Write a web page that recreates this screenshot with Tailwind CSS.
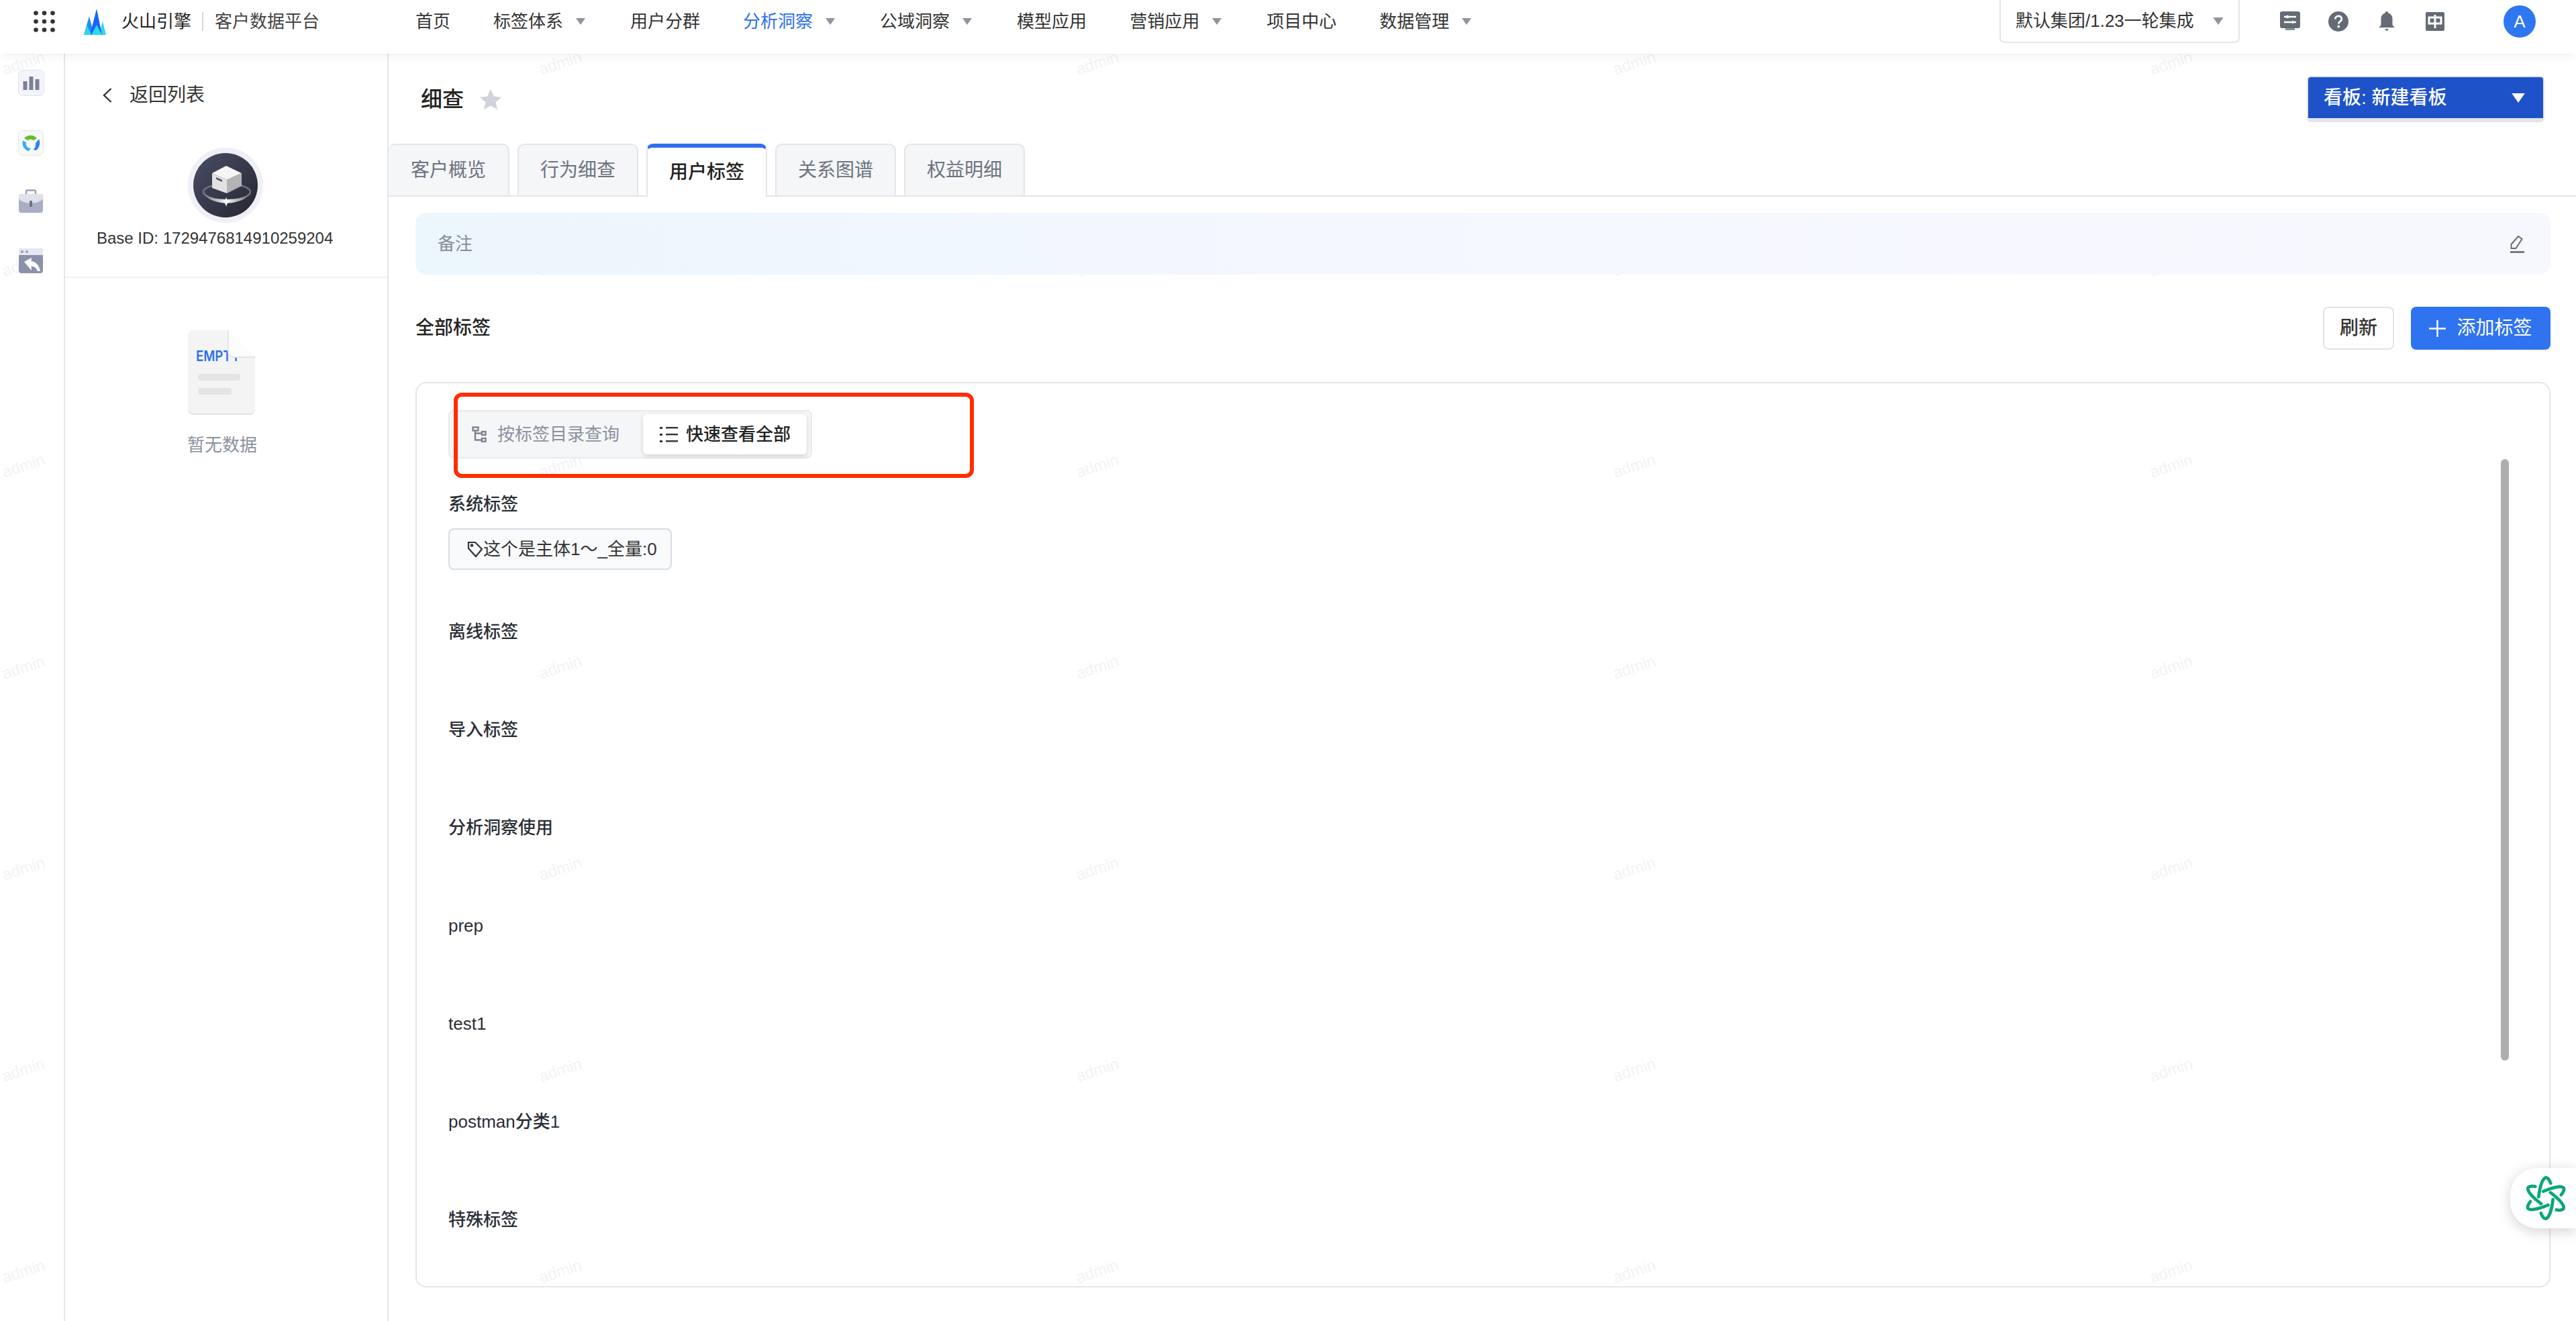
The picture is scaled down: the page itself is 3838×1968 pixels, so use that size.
<!DOCTYPE html>
<html lang="zh">
<head>
    <meta charset="UTF-8">
    <title>细查 | 客户数据平台</title>
    <script src="https://cdn.jsdelivr.net/npm/@tailwindcss/browser@4"></script>
</head>
<body class="bg-white">
<div class="relative w-[3838px] h-[1968px] overflow-hidden bg-white text-[#333] font-['Liberation_Sans','Noto_Sans_CJK_SC',sans-serif]">

    <!-- watermark -->
    <div class="absolute left-0 top-[78px] grid grid-cols-[repeat(5,800px)] auto-rows-[300px] items-start pointer-events-none text-[#f3f3f5] text-[24px] leading-[32px]">
        <span class="w-[70px] h-[32px] text-center -rotate-[18deg]">admin</span><span class="w-[70px] h-[32px] text-center -rotate-[18deg]">admin</span><span class="w-[70px] h-[32px] text-center -rotate-[18deg]">admin</span><span class="w-[70px] h-[32px] text-center -rotate-[18deg]">admin</span><span class="w-[70px] h-[32px] text-center -rotate-[18deg]">admin</span>
        <span class="w-[70px] h-[32px] text-center -rotate-[18deg]">admin</span><span class="w-[70px] h-[32px] text-center -rotate-[18deg]">admin</span><span class="w-[70px] h-[32px] text-center -rotate-[18deg]">admin</span><span class="w-[70px] h-[32px] text-center -rotate-[18deg]">admin</span><span class="w-[70px] h-[32px] text-center -rotate-[18deg]">admin</span>
        <span class="w-[70px] h-[32px] text-center -rotate-[18deg]">admin</span><span class="w-[70px] h-[32px] text-center -rotate-[18deg]">admin</span><span class="w-[70px] h-[32px] text-center -rotate-[18deg]">admin</span><span class="w-[70px] h-[32px] text-center -rotate-[18deg]">admin</span><span class="w-[70px] h-[32px] text-center -rotate-[18deg]">admin</span>
        <span class="w-[70px] h-[32px] text-center -rotate-[18deg]">admin</span><span class="w-[70px] h-[32px] text-center -rotate-[18deg]">admin</span><span class="w-[70px] h-[32px] text-center -rotate-[18deg]">admin</span><span class="w-[70px] h-[32px] text-center -rotate-[18deg]">admin</span><span class="w-[70px] h-[32px] text-center -rotate-[18deg]">admin</span>
        <span class="w-[70px] h-[32px] text-center -rotate-[18deg]">admin</span><span class="w-[70px] h-[32px] text-center -rotate-[18deg]">admin</span><span class="w-[70px] h-[32px] text-center -rotate-[18deg]">admin</span><span class="w-[70px] h-[32px] text-center -rotate-[18deg]">admin</span><span class="w-[70px] h-[32px] text-center -rotate-[18deg]">admin</span>
        <span class="w-[70px] h-[32px] text-center -rotate-[18deg]">admin</span><span class="w-[70px] h-[32px] text-center -rotate-[18deg]">admin</span><span class="w-[70px] h-[32px] text-center -rotate-[18deg]">admin</span><span class="w-[70px] h-[32px] text-center -rotate-[18deg]">admin</span><span class="w-[70px] h-[32px] text-center -rotate-[18deg]">admin</span>
        <span class="w-[70px] h-[32px] text-center -rotate-[18deg]">admin</span><span class="w-[70px] h-[32px] text-center -rotate-[18deg]">admin</span><span class="w-[70px] h-[32px] text-center -rotate-[18deg]">admin</span><span class="w-[70px] h-[32px] text-center -rotate-[18deg]">admin</span><span class="w-[70px] h-[32px] text-center -rotate-[18deg]">admin</span>
    </div>

    <!-- top bar -->
    <header class="relative z-10 h-[80px] pb-[16px] flex items-center bg-white shadow-[0_2px_14px_rgba(0,0,0,0.07)]">
        <svg class="ml-[50px] w-[32px] h-[32px]" viewBox="0 0 32 32" fill="#333">
            <circle cx="3.500" cy="3.500" r="3.300"/><circle cx="16" cy="3.500" r="3.300"/><circle cx="28.500" cy="3.500" r="3.300"/>
            <circle cx="3.500" cy="16" r="3.300"/><circle cx="16" cy="16" r="3.300"/><circle cx="28.500" cy="16" r="3.300"/>
            <circle cx="3.500" cy="28.500" r="3.300"/><circle cx="16" cy="28.500" r="3.300"/><circle cx="28.500" cy="28.500" r="3.300"/>
        </svg>
        <svg class="ml-[43px] w-[34px] h-[40px]" viewBox="0 0 34 40">
            <path d="M0 40 8 12l7 28z" fill="#1f8cf5"/>
            <path d="M33 40 28 20l-6 20z" fill="#36d6e0"/>
            <path d="M9 40 19 1l8 39z" fill="#1664ff"/>
            <path d="M0 40 5 26l6 14z" fill="#2fd9e6"/>
            <path d="M11 40l8-15 8 15z" fill="#2fd9e6"/>
        </svg>
        <span class="ml-[22px] text-[26px] text-[#222] whitespace-nowrap">火山引擎</span>
        <span class="ml-[16px] w-[2px] h-[28px] bg-[#d5d8de]"></span>
        <span class="ml-[17px] text-[26px] text-[#444] whitespace-nowrap">客户数据平台</span>

        <nav class="ml-[143px] flex items-center gap-[64px] text-[26px] text-[#333] whitespace-nowrap">
            <a>首页</a>
            <a class="flex items-center gap-[19px] mr-[3px]">标签体系
                <svg class="w-[14px] h-[10px]" viewBox="0 0 14 10"><path d="M0 0h14L7 10z" fill="#8f959e"/></svg></a>
            <a>用户分群</a>
            <a class="flex items-center gap-[19px] mr-[3px] text-[#2f6fed]">分析洞察
                <svg class="w-[14px] h-[10px]" viewBox="0 0 14 10"><path d="M0 0h14L7 10z" fill="#8f959e"/></svg></a>
            <a class="flex items-center gap-[19px] mr-[3px]">公域洞察
                <svg class="w-[14px] h-[10px]" viewBox="0 0 14 10"><path d="M0 0h14L7 10z" fill="#8f959e"/></svg></a>
            <a>模型应用</a>
            <a class="flex items-center gap-[19px] mr-[3px]">营销应用
                <svg class="w-[14px] h-[10px]" viewBox="0 0 14 10"><path d="M0 0h14L7 10z" fill="#8f959e"/></svg></a>
            <a>项目中心</a>
            <a class="flex items-center gap-[19px]">数据管理
                <svg class="w-[14px] h-[10px]" viewBox="0 0 14 10"><path d="M0 0h14L7 10z" fill="#8f959e"/></svg></a>
        </nav>

        <div class="ml-auto self-start h-[64px] w-[358px] flex items-center justify-between pl-[22px] pr-[22px] bg-white border-2 border-t-0 border-[#e5e6eb] rounded-b-[8px] text-[26px] text-[#333] whitespace-nowrap">
            <span>默认集团/1.23一轮集成</span>
            <svg class="w-[16px] h-[11px]" viewBox="0 0 14 10"><path d="M0 0h14L7 10z" fill="#8f959e"/></svg>
        </div>

        <svg class="ml-[60px] w-[30px] h-[30px]" viewBox="0 0 30 30">
            <rect x="0" y="0" width="30" height="25" rx="3" fill="#646b75"/><rect x="8" y="25" width="14" height="3" fill="#8b919a"/>
            <path d="M6 8h18M6 16h18" stroke="#fff" stroke-width="2.400"/><circle cx="11" cy="8" r="2.200" fill="#fff"/><path d="M18 13.500 23 16l-5 2.500z" fill="#fff"/>
        </svg>
        <svg class="ml-[42px] w-[30px] h-[30px]" viewBox="0 0 30 30">
            <circle cx="15" cy="15" r="15" fill="#646b75"/>
            <path d="M10.300 11.500c0-6 9.600-6 9.600-.3 0 3.600-4.500 3.600-4.500 7.300" fill="none" stroke="#fff" stroke-width="2.800"/><circle cx="15.300" cy="22.500" r="1.900" fill="#fff"/>
        </svg>
        <svg class="ml-[45px] w-[24px] h-[30px]" viewBox="0 0 24 30">
            <path d="M12 0c1.500 0 2.200 1 2.300 2.400C18.500 3.600 20.500 7 20.500 11v8c0 2 1.500 3.500 3.500 5H0c2-1.500 3.500-3 3.500-5v-8c0-4 2-7.400 6.200-8.600C9.800 1 10.500 0 12 0z" fill="#646b75"/>
            <path d="M9 26h6l-3 3.500z" fill="#646b75"/>
        </svg>
        <svg class="ml-[46px] w-[28px] h-[28px]" viewBox="0 0 28 28">
            <rect width="28" height="28" rx="2" fill="#646b75"/>
            <path d="M14 4v20" stroke="#fff" stroke-width="3"/><rect x="5" y="8" width="18" height="9" fill="none" stroke="#fff" stroke-width="3"/>
        </svg>
        <span class="ml-[88px] mr-[60px] w-[48px] h-[48px] rounded-full bg-[#2f76f1] text-white text-[26px] flex items-center justify-center">A</span>
    </header>

    <div class="relative flex h-[1888px]">
        <!-- app rail -->
        <aside class="w-[97px] shrink-0 border-r-2 border-[#e3e6ee] flex flex-col pl-[27px] pt-[24px]">
            <svg class="w-[39px] h-[39px]" viewBox="0 0 39 39">
                <rect x="0.500" y="0.500" width="38" height="38" rx="7" fill="#f4f5fb" stroke="#dfe2ec"/>
                <rect x="7.500" y="17" width="6" height="13" fill="#7b8098"/><rect x="16.500" y="10" width="6" height="20" fill="#7b8098"/><rect x="25.500" y="14" width="6" height="16" fill="#7b8098"/>
            </svg>
            <svg class="mt-[51px] w-[38px] h-[38px]" viewBox="0 0 38 38">
                <rect x="0.500" y="0.500" width="37" height="37" rx="7" fill="#f8f8fa" stroke="#e3e4ea"/>
                <path d="M9 12a13 13 0 0 1 19 0l-5 3a8 8 0 0 0-9 0z" fill="#62c21d"/>
                <path d="M7 15.500c-2 7 2 14 9 15.500l3-4c-5-.5-8-3-7-9z" fill="#2fb0f7"/>
                <path d="M31 13c2.500 6 1 13-4 17l-4.500-1c3-2.500 4-5.500 3.500-9.500z" fill="#2b82f2"/>
            </svg>
            <svg class="mt-[50px] w-[38px] h-[36px]" viewBox="0 0 38 36">
                <path d="M12 9V3.500a2 2 0 0 1 2-2h10a2 2 0 0 1 2 2V9" fill="none" stroke="#9da2b8" stroke-width="2.500"/>
                <rect x="1" y="7" width="36" height="28" rx="4" fill="#a9aec6"/>
                <path d="M1 11a4 4 0 0 1 4-4h28a4 4 0 0 1 4 4v3c-4 5-11 6.500-18 6.500S5 19 1 14z" fill="#dfe1ec"/>
                <rect x="17" y="17" width="4" height="9" rx="1" fill="#6b7088"/>
            </svg>
            <svg class="mt-[52px] w-[38px] h-[38px]" viewBox="0 0 38 38">
                <rect x="1" y="0" width="36" height="37" rx="4" fill="#8b90ab"/>
                <path d="M1 10V4a4 4 0 0 1 4-4h28a4 4 0 0 1 4 4v6z" fill="#e6e8f1"/>
                <circle cx="6" cy="5" r="2" fill="#9a9eb8"/><circle cx="13" cy="5" r="2" fill="#9a9eb8"/>
                <path d="M9 20 20 14l-.500 5c7 1 12 6 13.500 15h-4c-2-5-5-7-9.500-7.500L20 33z" fill="#fff"/>
            </svg>
        </aside>

        <!-- entity panel -->
        <aside class="w-[482px] shrink-0 border-r-2 border-[#e3e6ee] flex flex-col">
            <div class="mt-[40px] h-[44px] flex items-center pl-[56px] text-[28px] text-[#333]">
                <svg class="w-[14px] h-[24px]" viewBox="0 0 14 24" fill="none"><path d="M12.500 2 2 12l10.500 10" stroke="#333" stroke-width="2.400"/></svg>
                <span class="ml-[26px]">返回列表</span>
            </div>
            <svg class="mt-[56px] ml-[183px] w-[112px] h-[112px]" viewBox="0 0 112 112">
                <defs>
                    <linearGradient id="avatarBg" x1="0" y1="0" x2="1" y2="1"><stop offset="0" stop-color="#4a4e66"/><stop offset="1" stop-color="#24262f"/></linearGradient>
                    <linearGradient id="avatarRing" x1="0" y1="0" x2="1" y2="0"><stop offset="0" stop-color="#77787f"/><stop offset="0.500" stop-color="#f5f5f6"/><stop offset="1" stop-color="#66676e"/></linearGradient>
                </defs>
                <circle cx="56" cy="56" r="56" fill="#eef0f5"/>
                <circle cx="56" cy="56" r="48" fill="url(#avatarBg)"/>
                <ellipse cx="58" cy="66" rx="35" ry="12" fill="none" stroke="#6f7078" stroke-width="2.500"/>
                <path d="M22 60C22 90 94 90 94 60 92 74 78 77 58 77 38 77 24 74 22 60z" fill="url(#avatarRing)"/>
                <path d="M57 27 36 38l22 10 22-10z" fill="#f5f5f5"/>
                <path d="M36 38v22l22 8V48z" fill="#e2e2e2"/>
                <path d="M80 38v19l-22 11V48z" fill="#b3b3b6"/>
                <path d="M42 44l9 4v3l-9-4z" fill="#55586a"/>
                <path d="M57 88c-1-4-2-6-5-8 3-1 4-3 5-6 1 3 2 5 5 6-3 2-4 4-5 8z" fill="#fff"/>
            </svg>
            <p class="mt-[7px] h-[32px] pl-[47px] text-[24px] leading-[32px] text-[#333] whitespace-nowrap">Base ID: 1729476814910259204</p>
            <div class="mt-[41px] h-[2px] bg-[#f0f1f4]"></div>
            <svg class="mt-[78px] ml-[183px] w-[100px] h-[126px]" viewBox="0 0 100 126">
                <path d="M8 0h52l40 40v76a8 8 0 0 1-8 8H8a8 8 0 0 1-8-8V8a8 8 0 0 1 8-8z" fill="#f4f4f5"/>
                <path d="M0 116a8 8 0 0 0 8 8h84a8 8 0 0 0 8-8v2a8 8 0 0 1-8 8H8a8 8 0 0 1-8-8z" fill="#e2e2e4"/>
                <text x="12" y="46" font-size="22" font-weight="600" fill="#2f6fed" font-family="Inter, sans-serif" textLength="66" lengthAdjust="spacingAndGlyphs">EMPTY</text>
                <path d="M60 0v32a8 8 0 0 0 8 8h32z" fill="#fcfcfc"/>
                <path d="M60 0v32a8 8 0 0 0 8 8h32" fill="none" stroke="#e6e6e8" stroke-width="2"/>
                <rect x="15" y="65" width="63" height="10" rx="4" fill="#e4e4e6"/>
                <rect x="15" y="86" width="50" height="10" rx="4" fill="#e4e4e6"/>
            </svg>
            <p class="mt-[28px] h-[34px] pl-[182px] text-[26px] leading-[34px] text-[#8a919f]">暂无数据</p>
        </aside>

        <!-- main -->
        <main class="flex-1 flex flex-col min-w-0">
            <div class="mt-[33px] h-[69px] flex items-center pl-[48px] pr-[47px]">
                <h1 class="text-[32px] font-medium text-[#222]">细查</h1>
                <svg class="ml-[24px] w-[32px] h-[30px]" viewBox="0 0 32 30"><path d="M16 0l4.800 10.500 11.200 1.200-8.400 7.500 2.400 10.800L16 24.500 6 30l2.400-10.800L0 11.700l11.200-1.200z" fill="#d0d3d9"/></svg>
                <button class="ml-auto w-[354px] h-[69px] flex items-center justify-between pl-[23px] pr-[27px] rounded-[6px] bg-[#1e52c8] border-2 border-b-[6px] border-[#e4e5ea] text-white text-[28px] font-medium whitespace-nowrap">
                    <span>看板: 新建看板</span>
                    <svg class="w-[20px] h-[14px]" viewBox="0 0 14 10"><path d="M0 0h14L7 10z" fill="#fff"/></svg>
                </button>
            </div>

            <div class="mt-[30px] h-[81px] flex items-end gap-[12px] border-b-2 border-[#e4e5ea] text-[28px] text-[#6b7280] whitespace-nowrap">
                <a class="w-[180px] h-[79px] -mb-[2px] flex items-center justify-center border-2 border-l-0 border-[#e4e5ea] rounded-t-[10px] bg-[#f5f6f8]">客户概览</a>
                <a class="w-[180px] h-[79px] -mb-[2px] flex items-center justify-center border-2 border-[#e4e5ea] rounded-t-[10px] bg-[#f5f6f8]">行为细查</a>
                <a class="w-[180px] h-[79px] -mb-[2px] flex items-center justify-center border-x-2 border-t-[6px] border-x-[#e4e5ea] border-t-[#2f6fed] rounded-t-[10px] bg-white text-[#222] font-medium">用户标签</a>
                <a class="w-[180px] h-[79px] -mb-[2px] flex items-center justify-center border-2 border-[#e4e5ea] rounded-t-[10px] bg-[#f5f6f8]">关系图谱</a>
                <a class="w-[180px] h-[79px] -mb-[2px] flex items-center justify-center border-2 border-[#e4e5ea] rounded-t-[10px] bg-[#f5f6f8]">权益明细</a>
            </div>

            <div class="pl-[40px] pr-[38px] flex flex-col">
                <div class="mt-[24px] h-[92px] flex items-center justify-between pl-[33px] pr-[38px] rounded-[16px] bg-gradient-to-r from-[#ecf6fd] via-[#f5f8fe] via-50% to-[#f6f8fe] text-[26px] text-[#868d9a]">
                    <span>备注</span>
                    <svg class="w-[23px] h-[27px]" viewBox="0 0 23 27" fill="none" stroke="#646b75" stroke-width="2"><path d="M2.500 20V14L13 2l5.500 4-9 14z"/><path d="M1 25.500h21" stroke-width="2.600"/></svg>
                </div>

                <div class="mt-[47px] h-[66px] flex items-center">
                    <h2 class="text-[28px] font-medium text-[#222]">全部标签</h2>
                    <button class="ml-auto w-[106px] h-[64px] rounded-[8px] bg-white border-2 border-[#e3e3e6] text-[28px] text-[#333] font-medium">刷新</button>
                    <button class="ml-[25px] w-[208px] h-[64px] rounded-[8px] bg-[#2f73f0] text-white text-[28px] flex items-center justify-center gap-[16px]">
                        <svg class="w-[25px] h-[25px]" viewBox="0 0 25 25"><path d="M12.500 0v25M0 12.500h25" stroke="#fff" stroke-width="2.400"/></svg>添加标签
                    </button>
                </div>

                <section class="relative mt-[47px] h-[1349px] border-2 border-[#e5e6eb] rounded-[16px] pt-[40px] pl-[47px]">
                    <div class="w-[542px] h-[72px] flex items-center rounded-[8px] border-2 border-[#e8e9ee] bg-[#f5f6f8] text-[26px] text-[#8a919f] whitespace-nowrap">
                        <svg class="ml-[33px] w-[22px] h-[24px]" viewBox="0 0 22 24" fill="none" stroke="#7d838f" stroke-width="2.400"><rect x="1.500" y="1.500" width="8" height="5"/><rect x="15" y="8" width="5.500" height="5"/><rect x="15" y="18" width="5.500" height="5"/><path d="M5 6.500V20.500h10M5 10.500h10"/></svg>
                        <span class="ml-[16px]">按标签目录查询</span>
                        <div class="ml-[35px] w-[244px] h-[60px] flex items-center rounded-[6px] bg-white shadow-[0_2px_6px_rgba(0,0,0,0.16)] text-[#222]">
                            <svg class="ml-[25px] w-[27px] h-[24px]" viewBox="0 0 27 24" fill="#333"><rect x="0" y="1" width="4" height="3"/><rect x="9" y="1" width="18" height="2.400"/><rect x="0" y="11" width="4" height="3"/><rect x="9" y="11" width="18" height="2.400"/><rect x="0" y="21" width="4" height="3"/><rect x="9" y="21" width="18" height="2.400"/></svg>
                            <span class="ml-[12px] font-medium">快速查看全部</span>
                        </div>
                    </div>

                    <h3 class="mt-[51px] h-[34px] text-[26px] leading-[34px] text-[#2a2e36] font-medium">系统标签</h3>
                    <div class="mt-[19px] w-[333px] h-[62px] flex items-center pl-[26px] rounded-[8px] border-2 border-[#d9dce2] bg-[#f9fafc] text-[26px] text-[#333] whitespace-nowrap">
                        <svg class="w-[24px] h-[26px]" viewBox="0 0 24 26" fill="none" stroke="#333" stroke-width="2.200"><path d="M2 3h10l10 10-9 11L2 12z"/><circle cx="7" cy="7.500" r="1.200"/></svg>
                        <span>这个是主体1～_全量:0</span>
                    </div>

                    <div class="mt-[75px] flex flex-col gap-[112px] text-[26px] leading-[34px] text-[#2a2e36] font-medium">
                        <h3 class="h-[34px]">离线标签</h3>
                        <h3 class="h-[34px]">导入标签</h3>
                        <h3 class="h-[34px]">分析洞察使用</h3>
                        <h3 class="h-[34px]">prep</h3>
                        <h3 class="h-[34px]">test1</h3>
                        <h3 class="h-[34px]">postman分类1</h3>
                        <h3 class="h-[34px]">特殊标签</h3>
                    </div>

                    <!-- scrollbar thumb -->
                    <div class="absolute right-[60px] top-[113px] w-[12px] h-[896px] rounded-full bg-[#aeaeae]"></div>
                    <!-- red annotation -->
                    <div class="absolute left-[55px] top-[14px] w-[775px] h-[127px] rounded-[12px] border-[6px] border-[#ff2d00]"></div>
                </section>
            </div>
        </main>
    </div>

    <!-- floating assistant -->
    <div class="absolute right-0 top-[1740px] z-20 w-[98px] h-[90px] flex items-center pl-[20px] bg-white rounded-l-[40px] shadow-[0_4px_20px_rgba(0,0,0,0.18)]">
        <svg class="w-[66px] h-[70px]" viewBox="-105 -110 210 220" fill="none" stroke="#0aa67a" stroke-width="15" stroke-linecap="round">
            <defs><path id="atomHook" d="M-34 -6C-30 -40-20 -88-2 -97 8 -101 18 -84 23 -71"/></defs>
            <use href="#atomHook"/><use href="#atomHook" transform="rotate(60)"/><use href="#atomHook" transform="rotate(120)"/><use href="#atomHook" transform="rotate(180)"/><use href="#atomHook" transform="rotate(240)"/><use href="#atomHook" transform="rotate(300)"/>
        </svg>
    </div>
</div>
</body>
</html>
